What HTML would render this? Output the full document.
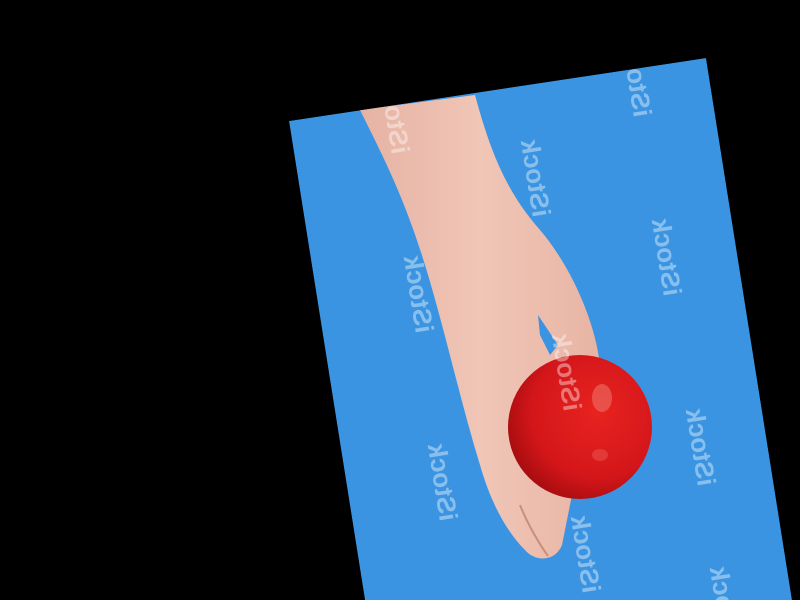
<!DOCTYPE html>
<html><head><style>html,body{margin:0;padding:0;background:#000;width:800px;height:600px;overflow:hidden}svg{display:block}</style></head>
<body>
<svg width="800" height="600" viewBox="0 0 800 600" xmlns="http://www.w3.org/2000/svg">
<defs>
<radialGradient id="ball" cx="0.62" cy="0.4" r="0.65">
<stop offset="0" stop-color="#e8231f"/>
<stop offset="0.7" stop-color="#d4161a"/>
<stop offset="1" stop-color="#a80d10"/>
</radialGradient>
<linearGradient id="skin" x1="0" y1="0" x2="1" y2="0">
<stop offset="0" stop-color="#e6b2a3"/>
<stop offset="0.5" stop-color="#f0c6b7"/>
<stop offset="1" stop-color="#e8b4a4"/>
</linearGradient>
<clipPath id="c"><polygon points="289,121 706,58 792,600 365,600"/></clipPath>
</defs>
<rect width="800" height="600" fill="#000"/>
<g clip-path="url(#c)">
<polygon points="289,121 706,58 792,600 365,600" fill="#3a94e2"/>
<path d="M360,110 L475,95 C490,150 505,190 540,230 C570,265 595,320 600,365 L575,480 L562,545 C555,562 535,562 525,550 C505,530 490,500 480,465 C460,400 445,330 425,265 C405,200 385,160 360,110 Z" fill="url(#skin)"/>
<polygon points="538,315 558,345 550,355 540,335" fill="#3a94e2"/>
<path d="M520,505 C528,525 540,545 548,556" stroke="#c88e7e" stroke-width="2" fill="none"/>
<circle cx="580" cy="427" r="72" fill="url(#ball)"/>
<ellipse cx="602" cy="398" rx="10" ry="14" fill="#f08075" opacity="0.5"/>
<ellipse cx="600" cy="455" rx="8" ry="6" fill="#ee6a62" opacity="0.4"/>
<g font-family="Liberation Sans, sans-serif" font-weight="bold" font-size="26" fill="#ffffff" fill-opacity="0.4">
<text transform="translate(533,218) rotate(-99) scale(1,-1)">iStock</text>
<text transform="translate(664,297) rotate(-99) scale(1,-1)">iStock</text>
<text transform="translate(634,118) rotate(-99) scale(1,-1)">iStock</text>
<text transform="translate(392,155) rotate(-99) scale(1,-1)">iStock</text>
<text transform="translate(416,334) rotate(-99) scale(1,-1)">iStock</text>
<text transform="translate(564,412) rotate(-99) scale(1,-1)">iStock</text>
<text transform="translate(698,487) rotate(-99) scale(1,-1)">iStock</text>
<text transform="translate(440,522) rotate(-99) scale(1,-1)">iStock</text>
<text transform="translate(583,594) rotate(-99) scale(1,-1)">iStock</text>
<text transform="translate(722,645) rotate(-99) scale(1,-1)">iStock</text>
</g>
</g>
</svg>
</body></html>
